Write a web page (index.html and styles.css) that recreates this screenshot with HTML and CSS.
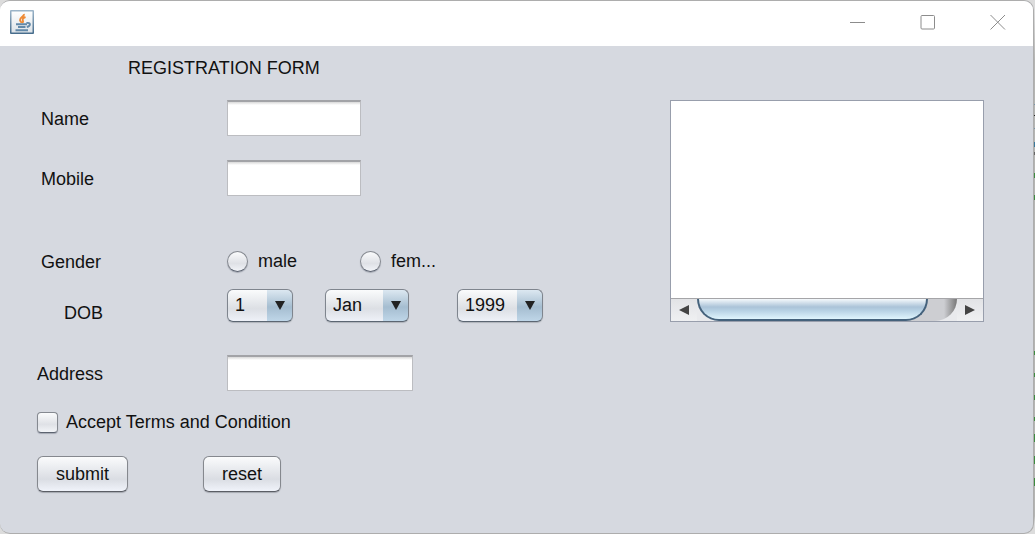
FILE: index.html
```html
<!DOCTYPE html>
<html lang="en">
<head>
<meta charset="utf-8">
<title>Registration Form</title>
<link rel="stylesheet" href="styles.css">
</head>
<body>
<main class="window">
  <header class="titlebar">
    <svg class="app-icon" viewBox="0 0 24 24" aria-hidden="true">
      <defs>
        <linearGradient id="frame" x2="0" y2="1"><stop stop-color="#9db6ca"/><stop offset="1" stop-color="#456b8b"/></linearGradient>
        <linearGradient id="face" x2="0" y2="1"><stop stop-color="#fdfefe"/><stop offset="1" stop-color="#dde3e8"/></linearGradient>
      </defs>
      <rect width="24" height="24" rx="1" fill="url(#frame)"/>
      <rect x="1.500" y="1.500" width="21" height="21" fill="url(#face)"/>
      <path d="M14 4c.5 2.500-4.500 3.500-4 6 .2 1.300 1.200 1.700 1.500 3M15.500 7c-2 .8-3.200 2-2.700 3.200.5 1.100.8 1.800-.5 2.800" fill="none" stroke="#ee8a35" stroke-width="1.900"/>
      <path d="M6 14.200h11M8 17h7.500M5.500 20.200h12.500M16.500 13c4.500-1 4.500 3.200.3 4" fill="none" stroke="#6289a9" stroke-width="1.900"/>
    </svg>
    <div class="window-controls">
      <button type="button" aria-label="Minimize"><svg viewBox="0 0 16 16"><path d="M0 8.500h15"/></svg></button>
      <button type="button" aria-label="Maximize"><svg viewBox="0 0 16 16"><rect x="1" y="1.500" width="13.500" height="13.500" rx="1"/></svg></button>
      <button type="button" aria-label="Close"><svg viewBox="0 0 16 16"><path d="M.5 1l14.500 14.500M15 1L.5 15.500"/></svg></button>
    </div>
  </header>
  <div class="content">
    <form class="form">
      <h1 class="heading">REGISTRATION FORM</h1>
      <div class="row">
        <label class="label" for="name">Name</label>
        <input class="field" id="name" type="text">
      </div>
      <div class="row row-mobile">
        <label class="label" for="mobile">Mobile</label>
        <input class="field" id="mobile" type="text">
      </div>
      <div class="row row-gender" role="radiogroup" aria-labelledby="gender">
        <span class="label" id="gender">Gender</span>
        <div class="choices">
          <label class="choice"><input class="radio" type="radio" name="gender">male</label>
          <label class="choice"><input class="radio" type="radio" name="gender">fem...</label>
        </div>
      </div>
      <div class="row row-dob">
        <span class="label label-end" id="dob">DOB</span>
        <div class="dates" role="group" aria-labelledby="dob">
          <span class="combo combo-day"><select aria-label="Day"><option>1</option></select></span>
          <span class="combo combo-month"><select aria-label="Month"><option>Jan</option></select></span>
          <span class="combo combo-year"><select aria-label="Year"><option>1999</option></select></span>
        </div>
      </div>
      <div class="row row-address">
        <label class="label label-end" for="address">Address</label>
        <input class="field field-wide" id="address" type="text">
      </div>
      <label class="terms"><input class="check" type="checkbox">Accept Terms and Condition</label>
      <div class="actions">
        <button class="button" type="submit">submit</button>
        <button class="button" type="reset">reset</button>
      </div>
    </form>
    <div class="output">
      <textarea class="output-text" aria-label="Output"></textarea>
      <div class="scrollbar">
        <button class="arrow" type="button" aria-label="Scroll left"><svg viewBox="0 0 12 12"><path d="M11 1v10L1 6z"/></svg></button>
        <div class="track"><div class="thumb"></div></div>
        <button class="arrow" type="button" aria-label="Scroll right"><svg viewBox="0 0 12 12"><path d="M1 1v10l10-5z"/></svg></button>
      </div>
    </div>
  </div>
</main>
</body>
</html>
```
FILE: styles.css
```css
* { box-sizing: border-box; }

body {
  margin: 0;
  min-height: 100vh;
  display: flex;
  padding: 0 1px 0 0;
  background: linear-gradient(#dcdcdc 12px, #b4b4b2 60px, #b4b4b2 516px, #dcdcdc 524px);
  color: #111;
  font: 18px/24px "Liberation Sans", Arial, sans-serif;
}

/* Sliver of the editor behind the window */
body::after {
  content: "";
  position: absolute;
  top: 0;
  right: 0;
  width: 1px;
  height: 500px;
  background:
    linear-gradient(#222, #222) 0 115px / 1px 1px no-repeat,
    linear-gradient(#7894a8, #7894a8) 0 104px / 1px 1px no-repeat,
    linear-gradient(#7894a8, #7894a8) 0 128px / 1px 1px no-repeat,
    linear-gradient(#39789c, #39789c) 0 142px / 1px 5px no-repeat,
    linear-gradient(#666, #666) 0 152px / 1px 3px no-repeat,
    linear-gradient(#3d8b40, #3d8b40) 0 173px / 1px 5px no-repeat,
    linear-gradient(#3d8b40, #3d8b40) 0 195px / 1px 5px no-repeat,
    linear-gradient(#3d8b40, #3d8b40) 0 351px / 1px 4px no-repeat,
    linear-gradient(#3d8b40, #3d8b40) 0 373px / 1px 4px no-repeat,
    linear-gradient(#3d8b40, #3d8b40) 0 395px / 1px 5px no-repeat,
    linear-gradient(#3d8b40, #3d8b40) 0 417px / 1px 4px no-repeat,
    linear-gradient(#3d8b40, #3d8b40) 0 434px / 1px 8px no-repeat,
    linear-gradient(#3d8b40, #3d8b40) 0 456px / 1px 8px no-repeat,
    linear-gradient(#3d8b40, #3d8b40) 0 478px / 1px 8px no-repeat;
}

button, input, select, textarea { font: inherit; color: inherit; margin: 0; }

.window {
  flex: 1;
  display: flex;
  flex-direction: column;
  border: 1px solid #adadad;
  border-left: 0;
  border-radius: 10px;
  overflow: hidden;
  background: #d6d9e0;
}

.titlebar {
  display: flex;
  align-items: center;
  justify-content: space-between;
  height: 45px;
  padding: 0 19px 3px 10px;
  background: #fff;
}

.app-icon { width: 24px; height: 24px; }

.window-controls { display: flex; gap: 38px; }

.window-controls button {
  display: flex;
  padding: 8px;
  border: 0;
  background: none;
}

.window-controls svg {
  width: 16px;
  height: 16px;
  fill: none;
  stroke: #8c8c8c;
}

.content {
  display: flex;
  justify-content: space-between;
  align-items: flex-start;
  gap: 24px;
  padding: 10px 49px 24px 33px;
}

.heading {
  margin: 0 0 20px 95px;
  font-size: 18px;
  font-weight: 400;
  line-height: 24px;
}

.row {
  display: grid;
  grid-template-columns: 194px 1fr;
  align-items: center;
}

.row-mobile { margin-top: 24px; }
.row-gender { margin-top: 52px; }
.row-dob { margin-top: 11px; }
.row-address { margin-top: 30px; }

.label { padding: 2px 0 0 8px; }

.label-end {
  padding: 2px 124px 0 0;
  text-align: right;
}

.row-dob .label { padding-top: 16px; }

.field {
  width: 134px;
  height: 36px;
  padding: 0 8px;
  border: 1px solid #bcbdc1;
  border-top: 2px solid #a2a3a7;
  border-radius: 0;
  background: linear-gradient(#d8d8d8, #fff 3px);
}

.field-wide { width: 186px; }

.choices { display: grid; grid-template-columns: 133px 1fr; }

.choice, .terms { display: flex; align-items: center; }
.choice { gap: 10px; }

.radio, .check {
  appearance: none;
  width: 21px;
  height: 21px;
  border: 1px solid #858990;
  border-bottom-color: #5c6370;
  background: linear-gradient(#fafbfc, #dfe1e6 60%, #f2f4f8);
  box-shadow: 0 1px 1px #a5a9b3;
}

.radio { border-radius: 50%; }
.check { border-radius: 4px; }

.dates { display: flex; }
.combo-day { width: 66px; margin-right: 32px; }
.combo-month { width: 84px; margin-right: 48px; }
.combo-year { width: 86px; }

.combo { position: relative; display: block; }

.combo::after {
  content: "";
  position: absolute;
  top: 12px;
  right: 8px;
  border: 5px solid transparent;
  border-top: 9px solid #222;
  border-bottom: 0;
  pointer-events: none;
}

.combo select {
  appearance: none;
  display: block;
  width: 100%;
  height: 33px;
  padding: 0 26px 0 7px;
  border: 1px solid #7f858e;
  border-bottom-color: #5c6672;
  border-radius: 6px;
  background:
    linear-gradient(#dce8f1, #a5bdd0 55%, #bfd6e8) right / 25px 100% no-repeat,
    linear-gradient(#fafbfc, #dcdfe4 60%, #eef1f8);
  box-shadow: 0 1px 1px #aeb2ba;
}

.terms {
  width: fit-content;
  margin: 19px 0 0 4px;
  gap: 8px;
}

.actions {
  display: flex;
  gap: 75px;
  margin: 22px 0 0 4px;
}

.button {
  height: 36px;
  padding: 0 18px;
  border: 1px solid #85888e;
  border-bottom-color: #5b5e65;
  border-radius: 6px;
  background: linear-gradient(#fafbfc, #dadde3 65%, #f0f3fa);
  box-shadow: 0 1px 1px #a5a8b0;
}

.output {
  flex: 0 1 314px;
  margin-top: 44px;
  border: 1px solid #989eac;
  background: #fff;
}

.output-text {
  display: block;
  width: 100%;
  height: 197px;
  padding: 4px;
  border: 0;
  background: none;
  resize: none;
}

.scrollbar {
  display: flex;
  height: 23px;
  border-top: 1px solid #a5a5a8;
  background: #e9eaed;
}

.arrow {
  display: flex;
  align-items: center;
  justify-content: center;
  width: 26px;
  padding: 0;
  border: 0;
  background: linear-gradient(#e2e3e6, #eff0f2);
}

.arrow svg { width: 12px; height: 12px; fill: #444; }

.track {
  flex: 1;
  border-radius: 0 0 22px 0;
  background: linear-gradient(90deg, #e9eaed 10%, #cdced2 10%, #cdced2 95%, #777);
}

.thumb {
  width: 89%;
  height: 100%;
  border: 2px solid #45627c;
  border-top: 0;
  border-radius: 0 0 22px 22px;
  background: linear-gradient(#f5f9fc, #abc3d8 40%, #b9d3e5 60%, #e0f5fd);
}
```
